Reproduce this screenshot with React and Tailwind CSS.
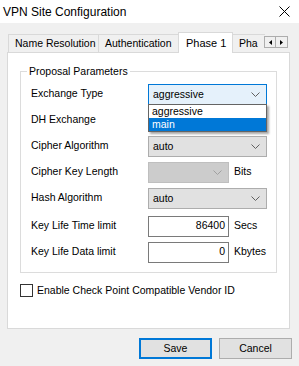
import React from 'react';

const font = { fontFamily: '"Liberation Sans", Arial, sans-serif' };

function Chevron({ color = '#606060' }) {
  return (
    <svg width="9" height="5" viewBox="0 0 9 5" className="shrink-0">
      <path d="M0.5 0.5 L4.5 4.5 L8.5 0.5" fill="none" stroke={color} strokeWidth="1" />
    </svg>
  );
}

function Select({ value, focused, disabled, width = 'w-[119px]' }) {
  const cls = focused
    ? 'bg-[#e5f1fb] border-[#0078d7]'
    : disabled
    ? 'bg-[#cccccc] border-[#bfbfbf]'
    : 'bg-[#e1e1e1] border-[#adadad]';
  return (
    <div className={`${width} h-[21px] border ${cls} flex items-center justify-between pl-[4px] pr-[6px]`}>
      <span className="text-[10.5px] text-black leading-none">{value}</span>
      <Chevron color={disabled ? '#a0a0a0' : '#606060'} />
    </div>
  );
}

function Row({ label, children, className = '' }) {
  return (
    <div className={`flex items-center h-[26px] ${className}`}>
      <span className="w-[117px] shrink-0 text-[10.5px] text-black">{label}</span>
      {children}
    </div>
  );
}

function NumInput({ value, unit }) {
  return (
    <>
      <div className="w-[81px] h-[21px] bg-white border border-[#7a7a7a] flex items-center justify-end pr-[3px] text-[10.5px]">
        {value}
      </div>
      <span className="ml-[5px] text-[10.5px]">{unit}</span>
    </>
  );
}

export default function App() {
  return (
    <div className="w-[299px] h-[366px] bg-[#f0f0f0] text-black flex flex-col" style={font}>
      <div className="h-[23px] bg-white flex items-center justify-between pl-[3px] pr-[9px]">
        <span className="text-[12px]">VPN Site Configuration</span>
        <svg width="11" height="11" viewBox="0 0 11 11">
          <path d="M0.5 0.5 L10.5 10.5 M10.5 0.5 L0.5 10.5" stroke="#000" strokeWidth="1" />
        </svg>
      </div>

      <div className="relative mt-[9px] ml-[8px] mr-[9px] h-[20px] flex items-end text-[10.5px] whitespace-nowrap">
        <div className="shrink-0 h-[18px] px-[6px] flex items-center border border-b-0 border-[#d9d9d9] bg-[#f0f0f0] w-[91px]">Name Resolution</div>
        <div className="shrink-0 h-[18px] px-[6px] flex items-center border border-b-0 border-l-0 border-[#d9d9d9] bg-[#f0f0f0] w-[80px]">Authentication</div>
        <div className="shrink-0 relative z-10 h-[21px] -mb-px px-[7px] flex items-center border border-b-0 border-[#d9d9d9] bg-white w-[55px] -ml-px text-[11px]">Phase 1</div>
        <div className="shrink-0 h-[18px] pl-[6px] flex items-center border-t border-[#d9d9d9] bg-[#f0f0f0] w-[32px] overflow-hidden">Pha</div>
        <div className="absolute right-[2px] top-[4px] flex">
          <div className="w-[12px] h-[12px] border border-[#adadad] bg-[#f0f0f0] flex items-center justify-center">
            <svg width="3" height="5" viewBox="0 0 3 5"><path d="M3 0 L0 2.5 L3 5 Z" fill="#000" /></svg>
          </div>
          <div className="w-[12px] h-[12px] border border-l-0 border-[#adadad] bg-[#f0f0f0] flex items-center justify-center">
            <svg width="3" height="5" viewBox="0 0 3 5"><path d="M0 0 L3 2.5 L0 5 Z" fill="#000" /></svg>
          </div>
        </div>
      </div>

      <div className="ml-[7px] mr-[9px] h-[277px] bg-white border border-[#d9d9d9] pt-[18px] px-[12px]">
        <div className="relative border border-[#dcdcdc] h-[202px] pt-[9px] pl-[10px]">
          <span className="absolute left-[6px] -top-[8px] bg-white px-[2px] text-[10.5px]">Proposal Parameters</span>
          <div className="relative flex flex-col">
            <Row label="Exchange Type"><Select value="aggressive" focused /></Row>
            <Row label="DH Exchange"><Select value="" /></Row>
            <Row label="Cipher Algorithm"><Select value="auto" /></Row>
            <Row label="Cipher Key Length">
              <Select value="" disabled width="w-[81px]" />
              <span className="ml-[5px] text-[10.5px]">Bits</span>
            </Row>
            <Row label="Hash Algorithm"><Select value="auto" /></Row>
            <Row label="Key Life Time limit" className="mt-[2px]"><NumInput value="86400" unit="Secs" /></Row>
            <Row label="Key Life Data limit"><NumInput value="0" unit="Kbytes" /></Row>

            <div className="absolute left-[117px] top-[23px] w-[119px] bg-white border border-[#646464] shadow-[2px_2px_2px_rgba(0,0,0,0.35)] text-[10.5px]">
              <div className="h-[13px] pl-[3px] flex items-center">aggressive</div>
              <div className="h-[13px] pl-[3px] flex items-center bg-[#0078d7] text-white">main</div>
            </div>
          </div>
        </div>

        <div className="flex items-center mt-[10px]">
          <div className="w-[13px] h-[13px] border border-[#333] bg-white" />
          <span className="ml-[4px] text-[10.5px]">Enable Check Point Compatible Vendor ID</span>
        </div>
      </div>

      <div className="flex justify-end gap-[7px] mt-[9px] mr-[7px]">
        <button className="w-[73px] h-[21px] bg-[#e1e1e1] border-2 border-[#0078d7] text-[10.5px]">Save</button>
        <button className="w-[73px] h-[21px] bg-[#e1e1e1] border border-[#adadad] text-[10.5px]">Cancel</button>
      </div>
    </div>
  );
}
